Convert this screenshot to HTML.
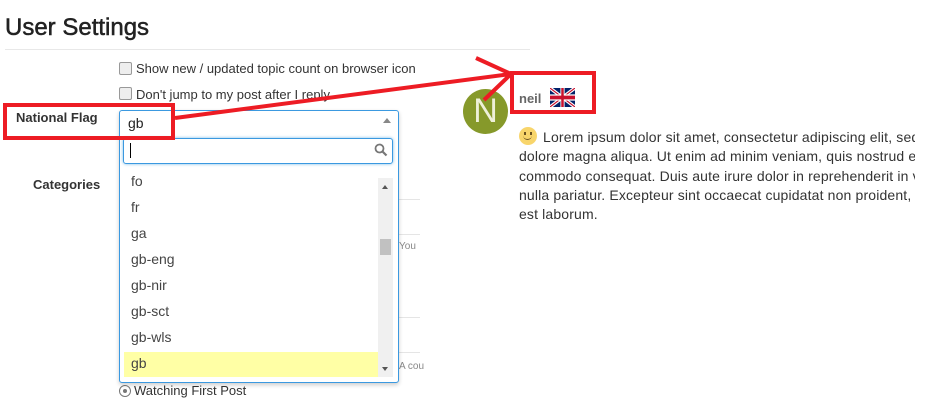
<!DOCTYPE html>
<html><head><meta charset="utf-8"><style>
body{margin:0;width:933px;height:406px;background:#fff;position:relative;overflow:hidden;font-family:"Liberation Sans",Arial,sans-serif;color:#333}
.a{position:absolute;white-space:nowrap}
.cb{position:absolute;width:11px;height:11px;border:1px solid #999;border-radius:2px;background:#eee}
.it{position:absolute;left:131px;font-size:14px;color:#444}
.gl{position:absolute;left:398px;width:22px;height:1px;background:#e5e5e5}
</style></head><body>
<div class="a" style="left:5px;top:14px;font-size:24px;color:#222;-webkit-text-stroke:0.5px #222">User Settings</div>
<div class="a" style="left:5px;top:49px;width:525px;height:1px;background:#e8e8e8"></div>
<div class="a" style="left:0;top:62px;width:530px;height:16px;overflow:hidden"><div class="cb" style="left:119px;top:0px"></div><div class="a" style="left:136px;top:-1px;font-size:13px">Show new / updated topic count on browser icon</div></div>
<div class="cb" style="left:119px;top:87px"></div><div class="a" style="left:136px;top:87px;font-size:13px">Don't jump to my post after I reply</div>
<div class="a" style="left:16px;top:110px;font-size:13px;font-weight:bold">National Flag</div>
<div class="a" style="left:33px;top:177px;font-size:13px;font-weight:bold">Categories</div>
<div class="gl" style="top:199px"></div><div class="gl" style="top:234px"></div><div class="gl" style="top:317px"></div><div class="gl" style="top:352px"></div>
<div class="a" style="left:399px;top:241px;font-size:10px;color:#888">You</div>
<div class="a" style="left:399px;top:361px;font-size:10px;color:#888">A cou</div>
<div class="a" style="left:119px;top:385px;width:10px;height:10px;border:1px solid #777;border-radius:50%"></div>
<div class="a" style="left:123px;top:389px;width:4px;height:4px;background:#777;border-radius:50%"></div>
<div class="a" style="left:134px;top:383px;font-size:13px">Watching First Post</div>
<div class="a" style="left:119px;top:110px;width:278px;height:271px;border:1px solid #3b99e0;border-radius:3px;box-shadow:0 2px 4px rgba(0,0,0,.2);background:#fff"></div>
<div class="a" style="left:128px;top:115px;font-size:14px;color:#222">gb</div>
<div class="a" style="left:383px;top:118px;width:0;height:0;border-left:4px solid transparent;border-right:4px solid transparent;border-bottom:5px solid #888"></div>
<div class="a" style="left:123px;top:138px;width:268px;height:24px;border:1px solid #3b99e0;border-radius:3px;box-shadow:0 0 3px #7bbbe8"></div>
<div class="a" style="left:130px;top:143px;width:1px;height:15px;background:#000"></div>
<svg class="a" style="left:374px;top:143px" width="14" height="14"><circle cx="5.5" cy="5.5" r="4" fill="none" stroke="#777" stroke-width="1.8"/><path d="M8.5 8.5L12.5 12.5" stroke="#777" stroke-width="2.2"/></svg>
<div class="a" style="left:124px;top:352px;width:254px;height:25px;background:#ffffa5"></div>
<div class="it" style="top:173px">fo</div><div class="it" style="top:199px">fr</div><div class="it" style="top:225px">ga</div><div class="it" style="top:251px">gb-eng</div><div class="it" style="top:277px">gb-nir</div><div class="it" style="top:303px">gb-sct</div><div class="it" style="top:329px">gb-wls</div><div class="it" style="top:355px">gb</div>
<div class="a" style="left:378px;top:178px;width:15px;height:199px;background:#f0f0f0"></div>
<div class="a" style="left:380px;top:239px;width:11px;height:16px;background:#c1c1c1"></div>
<div class="a" style="left:382px;top:185px;border-left:3.5px solid transparent;border-right:3.5px solid transparent;border-bottom:4px solid #555"></div>
<div class="a" style="left:382px;top:367px;border-left:3.5px solid transparent;border-right:3.5px solid transparent;border-top:4px solid #555"></div>
<div class="a" style="left:463px;top:89px;width:45px;height:45px;border-radius:50%;background:#86992a;color:#eef0d8;font-size:34px;text-align:center;line-height:45px">N</div>
<div class="a" style="left:519px;top:91px;font-size:13px;font-weight:bold;color:#666">neil</div>
<svg class="a" style="left:550px;top:88px" width="25" height="19" viewBox="0 0 60 30" preserveAspectRatio="none"><rect width="60" height="30" fill="#012169"/><path d="M0 0L60 30M60 0L0 30" stroke="#fff" stroke-width="6"/><path d="M0 0L60 30M60 0L0 30" stroke="#c8102e" stroke-width="2"/><path d="M30 0V30M0 15H60" stroke="#fff" stroke-width="10"/><path d="M30 0V30M0 15H60" stroke="#c8102e" stroke-width="6"/></svg>
<div class="a" style="left:519px;top:127px;width:396px;overflow:hidden;font-size:14px;line-height:19.3px;color:#333;letter-spacing:0.15px">
<span style="display:inline-block;width:18px;height:18px;border-radius:50%;background:#f8d56b;vertical-align:-3px;position:relative;margin-right:2px"><span style="position:absolute;left:5px;top:5px;width:2px;height:3px;background:#6b5220"></span><span style="position:absolute;left:11px;top:5px;width:2px;height:3px;background:#6b5220"></span><span style="position:absolute;left:4px;top:7px;width:9px;height:5px;border-bottom:1.5px solid #6b5220;border-radius:0 0 5px 5px"></span></span> Lorem ipsum dolor sit amet, consectetur adipiscing elit, sed do<br>dolore magna aliqua. Ut enim ad minim veniam, quis nostrud ex<br>commodo consequat. Duis aute irure dolor in reprehenderit in vo<br>nulla pariatur. Excepteur sint occaecat cupidatat non proident, su<br>est laborum.</div>
<div class="a" style="left:3px;top:103px;width:164px;height:29px;border:4px solid #ed1c24"></div>
<div class="a" style="left:510px;top:71px;width:78px;height:35px;border:4px solid #ed1c24"></div>
<svg class="a" style="left:0;top:0" width="933" height="406"><path d="M175 118L511 74M476 58L511 74M484 100L511 74" stroke="#ed1c24" stroke-width="4" fill="none"/></svg>
</body></html>
